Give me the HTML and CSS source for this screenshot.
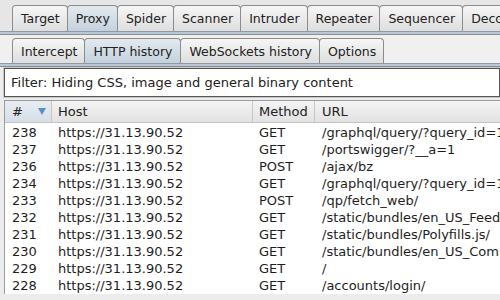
FILE: index.html
```html
<!DOCTYPE html>
<html>
<head>
<meta charset="utf-8">
<link rel="stylesheet" href="styles.css">
</head>
<body>
<div class="tabbar main">
  <div class="tab">Target</div>
  <div class="tab sel">Proxy</div>
  <div class="tab">Spider</div>
  <div class="tab">Scanner</div>
  <div class="tab">Intruder</div>
  <div class="tab">Repeater</div>
  <div class="tab">Sequencer</div>
  <div class="tab">Decoder</div>
</div>
<div class="strip"></div>
<div class="tabbar sub">
  <div class="tab">Intercept</div>
  <div class="tab sel">HTTP history</div>
  <div class="tab">WebSockets history</div>
  <div class="tab">Options</div>
</div>
<div class="strip"></div>
<div class="filter">Filter: Hiding CSS, image and general binary content</div>
<div class="table">
  <div class="row head">
    <div class="cell num sorted"><span>#</span><span class="arrow"></span></div>
    <div class="cell">Host</div>
    <div class="cell">Method</div>
    <div class="cell last">URL</div>
  </div>
  <div class="row"><div class="cell num">238</div><div class="cell">https://31.13.90.52</div><div class="cell">GET</div><div class="cell last">/graphql/query/?query_id=17888483320059182</div></div>
  <div class="row"><div class="cell num">237</div><div class="cell">https://31.13.90.52</div><div class="cell">GET</div><div class="cell last">/portswigger/?__a=1</div></div>
  <div class="row"><div class="cell num">236</div><div class="cell">https://31.13.90.52</div><div class="cell">POST</div><div class="cell last">/ajax/bz</div></div>
  <div class="row"><div class="cell num">234</div><div class="cell">https://31.13.90.52</div><div class="cell">GET</div><div class="cell last">/graphql/query/?query_id=17851374694183129</div></div>
  <div class="row"><div class="cell num">233</div><div class="cell">https://31.13.90.52</div><div class="cell">POST</div><div class="cell last">/qp/fetch_web/</div></div>
  <div class="row"><div class="cell num">232</div><div class="cell">https://31.13.90.52</div><div class="cell">GET</div><div class="cell last">/static/bundles/en_US_FeedPage.js</div></div>
  <div class="row"><div class="cell num">231</div><div class="cell">https://31.13.90.52</div><div class="cell">GET</div><div class="cell last">/static/bundles/Polyfills.js/</div></div>
  <div class="row"><div class="cell num">230</div><div class="cell">https://31.13.90.52</div><div class="cell">GET</div><div class="cell last">/static/bundles/en_US_Commons.js</div></div>
  <div class="row"><div class="cell num">229</div><div class="cell">https://31.13.90.52</div><div class="cell">GET</div><div class="cell last">/</div></div>
  <div class="row"><div class="cell num">228</div><div class="cell">https://31.13.90.52</div><div class="cell">GET</div><div class="cell last">/accounts/login/</div></div>
</div>
</body>
</html>
```
FILE: styles.css
```css
html, body {
  margin: 0;
  padding: 0;
  background: #ececec;
  font-family: "DejaVu Sans", "Lucida Grande", sans-serif;
  font-size: 13px;
  color: #1a1a1a;
  overflow: hidden;
  width: 500px;
  height: 300px;
}
.tabbar {
  display: flex;
  padding-left: 12px;
  white-space: nowrap;
  font-size: 12.5px;
}
.tabbar.main {
  padding-top: 5px;
  background: #e6e6e6;
}
.tabbar.sub {
  padding-top: 3px;
  background: #f0f0f0;
}
.tab {
  flex: none;
  height: 25px;
  line-height: 26px;
  padding: 0 7px 0 8px;
  border: 1px solid #8c8c8c;
  border-bottom: none;
  border-radius: 4px 4px 0 0;
  margin-right: -1px;
  background: linear-gradient(#f6f6f6, #dedede);
  color: #222;
}
.sub .tab {
  height: 24px;
  line-height: 25px;
}
.tab.sel {
  background: linear-gradient(#e3e9ef, #c4d1de);
}
.sub .tab.sel {
  padding: 0 8px 0 8px;
}
.strip {
  height: 2px;
  background: #b9c8d7;
  border-top: 1px solid #8e9aa6;
  border-bottom: 1px solid #8e8e8e;
}
.filter {
  margin: 1px 0 3px 4px;
  height: 27px;
  line-height: 28px;
  padding-left: 6px;
  background: #fff;
  border: 1px solid #555;
  box-shadow: 0 0 0 1px #c8c8c8;
  white-space: nowrap;
  color: #222;
}
.table {
  margin-left: 4px;
  background: #fff;
  border-left: 1px solid #9a9a9a;
  border-top: 1px solid #9a9a9a;
}
.row {
  display: grid;
  grid-template-columns: 47px 201px 62px 1fr;
  height: 17px;
  line-height: 17px;
  white-space: nowrap;
}
.row.head {
  height: 21px;
  line-height: 21px;
  background: linear-gradient(#f4f4f4, #e2e2e2);
  border-bottom: 1px solid #c4c4c4;
  margin-bottom: 1px;
}
.cell {
  overflow: hidden;
  padding-left: 7px;
  color: #1e1e1e;
}
.row .cell:nth-child(2) { padding-left: 6px; }
.row .cell:nth-child(3) { padding-left: 6px; }
.row .cell.last { padding-left: 7px; }
.head .cell {
  border-right: 1px solid #c6c6c6;
  color: #222;
}
.head .cell.last { border-right: none; }
.head .cell.sorted {
  display: flex;
  justify-content: space-between;
  align-items: center;
  padding-right: 5px;
  background: linear-gradient(#e8edf2, #d6dee6);
}
.arrow {
  width: 0;
  height: 0;
  border-left: 4px solid transparent;
  border-right: 4px solid transparent;
  border-top: 7px solid #5b8ec2;
}
```
